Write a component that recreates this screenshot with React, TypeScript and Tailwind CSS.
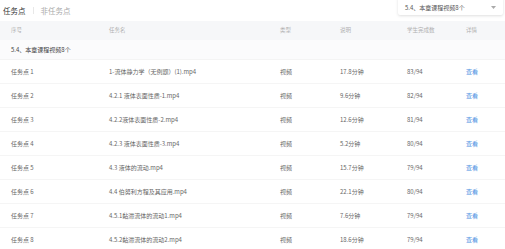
import React from "react";

const rows = [
  ["任务点 1", "1-流体静力学（无例题）(1).mp4", "视频", "17.8分钟", "83/94"],
  ["任务点 2", "4.2.1 液体表面性质-1.mp4", "视频", "9.6分钟", "82/94"],
  ["任务点 3", "4.2.2液体表面性质-2.mp4", "视频", "12.6分钟", "81/94"],
  ["任务点 4", "4.2.3 液体表面性质-3.mp4", "视频", "5.2分钟", "80/94"],
  ["任务点 5", "4.3 液体的流动.mp4", "视频", "15.7分钟", "79/94"],
  ["任务点 6", "4.4 伯努利方程及其应用.mp4", "视频", "22.1分钟", "80/94"],
  ["任务点 7", "4.5.1黏滞流体的流动1.mp4", "视频", "7.6分钟", "79/94"],
  ["任务点 8", "4.5.2黏滞流体的流动2.mp4", "视频", "18.6分钟", "79/94"],
];

const cols = "grid grid-cols-[98px_171px_60px_67px_59px_1fr] pl-[11px]";

export default function App() {
  return (
    <div
      className="w-[505px] h-[249px] overflow-hidden bg-white relative"
      style={{ fontFamily: '"Noto Sans CJK SC", "Noto Sans", sans-serif' }}
    >
      <div className="flex items-center h-[21px] pl-[3px]">
        <span className="text-[7.5px] text-[#333] leading-none">任务点</span>
        <span className="mx-[7px] w-px h-[7px] bg-[#e8e8e8]" />
        <span className="text-[7.5px] text-[#aaa] leading-none">非任务点</span>
      </div>
      <div className="absolute left-[398px] top-[-3px] w-[105px] h-[18px] bg-white rounded-[2px] shadow-[0_1px_3px_rgba(0,0,0,0.13)] flex items-center justify-between pl-[7px] pr-[7px] pt-[3px]">
        <span className="text-[6px] text-[#555] leading-none">5.4、本章课程视频8个</span>
        <svg width="5" height="3" viewBox="0 0 5 3">
          <path d="M0 0h5L2.5 3z" fill="#aaa" />
        </svg>
      </div>
      <div className={`${cols} h-[19px] items-center bg-[#f6f7f9] text-[5.5px] text-[#b0b0b0] leading-none`}>
        <span>序号</span>
        <span>任务名</span>
        <span>类型</span>
        <span>说明</span>
        <span>学生完成数</span>
        <span>详情</span>
      </div>
      <div className="h-[20px] flex items-center pl-[11px] bg-[#fbfbfc] border-b border-[#f4f4f4] text-[6px] text-[#444] leading-none">
        5.4、本章课程视频8个
      </div>
      {rows.map((r, i) => (
        <div
          key={i}
          className={`${cols} h-[24px] items-center border-b border-[#f5f5f5] text-[6px] text-[#666] leading-none`}
        >
          <span>{r[0]}</span>
          <span className="whitespace-nowrap">{r[1]}</span>
          <span>{r[2]}</span>
          <span>{r[3]}</span>
          <span>{r[4]}</span>
          <span className="text-[#4a90e2]">查看</span>
        </div>
      ))}
    </div>
  );
}
